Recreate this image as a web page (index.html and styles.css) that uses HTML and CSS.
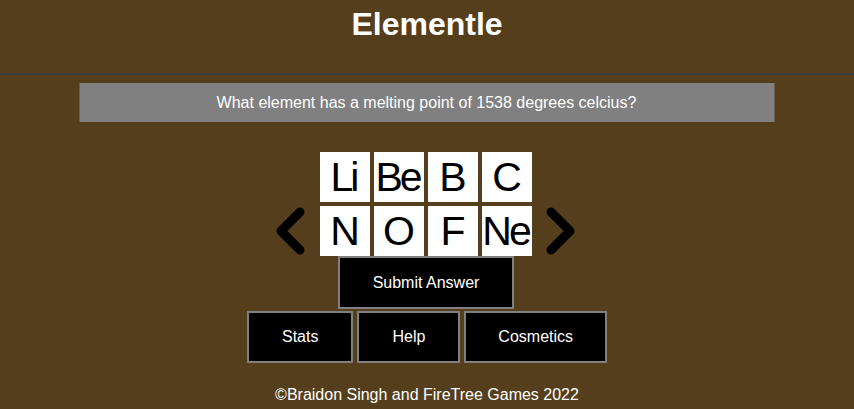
FILE: index.html
```html
<!DOCTYPE html>
<html>
<head>
<meta charset="utf-8">
<link rel="stylesheet" href="styles.css">
</head>
<body>
<header class="header">
  <h1 class="title">Elementle</h1>
</header>
<main class="main">
  <div class="question">What element has a melting point of 1538 degrees celcius?</div>
  <div class="board">
    <div class="tile r1 c1">Li</div>
    <div class="tile r1 c2">Be</div>
    <div class="tile r1 c3">B</div>
    <div class="tile r1 c4">C</div>
    <div class="arrow arrow-left">
      <svg width="30" height="48" viewBox="0 0 30 48"><polyline points="25,5 6,24 25,43" fill="none" stroke="#000" stroke-width="9" stroke-linecap="round" stroke-linejoin="round"/></svg>
    </div>
    <div class="tile r2 c1">N</div>
    <div class="tile r2 c2">O</div>
    <div class="tile r2 c3">F</div>
    <div class="tile r2 c4">Ne</div>
    <div class="arrow arrow-right">
      <svg width="30" height="48" viewBox="0 0 30 48"><polyline points="5,5 24,24 5,43" fill="none" stroke="#000" stroke-width="9" stroke-linecap="round" stroke-linejoin="round"/></svg>
    </div>
  </div>
  <button class="btn submit">Submit Answer</button>
  <div class="menu">
    <button class="btn">Stats</button>
    <button class="btn">Help</button>
    <button class="btn btn-wide">Cosmetics</button>
  </div>
  <footer class="footer">©Braidon Singh and FireTree Games 2022</footer>
</main>
</body>
</html>
```
FILE: styles.css
```css
html, body {
  margin: 0;
  padding: 0;
}
body {
  background: #553e1c;
  color: #fff;
  font-family: "Liberation Sans", Arial, sans-serif;
  font-size: 16px;
  width: 854px;
  height: 409px;
  overflow: hidden;
}
.header {
  height: 73px;
  border-bottom: 2px solid #3e3e3e;
  display: flex;
  justify-content: center;
}
.title {
  margin: 6px 0 0;
  font-size: 32px;
  font-weight: bold;
  line-height: 37px;
}
.main {
  display: flex;
  flex-direction: column;
  align-items: center;
}
.question {
  margin-top: 8px;
  width: 695px;
  height: 39px;
  background: #808080;
  display: flex;
  align-items: center;
  justify-content: center;
  transform: translateX(-0.5px);
}
.board {
  margin-top: 30px;
  margin-right: 2px;
  display: grid;
  grid-template-columns: 30px repeat(4, 50px) 30px;
  grid-template-rows: 50px 50px;
  column-gap: 4px;
  row-gap: 4px;
}
.r1 { grid-row: 1; }
.r2 { grid-row: 2; }
.c1 { grid-column: 2; }
.c2 { grid-column: 3; }
.c3 { grid-column: 4; }
.c4 { grid-column: 5; }
.arrow-left { grid-row: 2; grid-column: 1; }
.arrow-right { grid-row: 2; grid-column: 6; }
.tile {
  background: #fff;
  color: #000;
  font-size: 41px;
  letter-spacing: -3px;
  display: flex;
  align-items: center;
  justify-content: center;
  line-height: 1;
  padding-right: 3px;
  padding-top: 1px;
  box-sizing: border-box;
}
.arrow {
  display: flex;
  align-items: center;
  justify-content: center;
}
.arrow-left {
  margin-right: 11px;
  margin-left: -11px;
}
.arrow-right {
  margin-left: 10px;
  margin-right: -10px;
}
.btn {
  background: #000;
  color: #fff;
  border: 2px solid #808080;
  font-family: "Liberation Sans", Arial, sans-serif;
  font-size: 16px;
  line-height: 18px;
  padding: 15px 33px;
  margin: 0;
}
.btn-wide {
  padding: 15px 32px;
}
.submit {
  height: 53px;
  transform: translateX(-1px);
}
.menu {
  margin-top: 2px;
  display: flex;
  gap: 4px;
}
.footer {
  margin-top: 23px;
  line-height: 18px;
}
```
